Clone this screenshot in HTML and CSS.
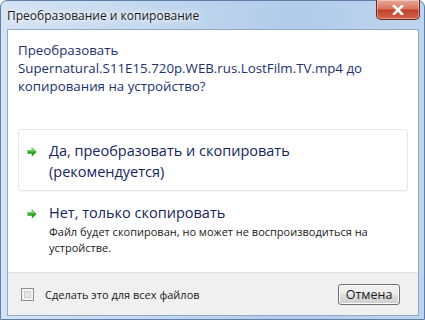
FILE: index.html
```html
<!DOCTYPE html>
<html lang="ru">
<head>
    <meta charset="UTF-8">
    <title>Преобразование и копирование</title>
    <link rel="stylesheet" href="styles.css">
</head>
<body>
    <div class="window">
        <div class="titlebar">
            <span class="title">Преобразование и копирование</span>
            <button class="close-btn">
                <svg width="12" height="10" viewBox="0 0 12 10">
                    <path d="M2 1 L10 9 M10 1 L2 9" stroke="#fff" stroke-width="2.6" stroke-linecap="square"/>
                </svg>
            </button>
        </div>

        <div class="client">
            <div class="content">
                <p class="instruction">Преобразовать Supernatural.S11E15.720p.WEB.rus.LostFilm.TV.mp4 до копирования на устройство?</p>

                <div class="command selected">
                    <svg class="arrow" width="10" height="10" viewBox="0 0 10 10">
                        <path d="M0.5 3.2 H4.8 V0.3 L9.6 5 L4.8 9.7 V6.8 H0.5 Z" fill="#2f9f2c"/>
                        <path d="M0.5 3.2 H4.8 V0.3 L7.6 3.1 V4.6 H0.5 Z" fill="#6fd05e"/>
                    </svg>
                    <div class="command-text">
                        <div class="command-title">Да, преобразовать и скопировать (рекомендуется)</div>
                    </div>
                </div>

                <div class="command">
                    <svg class="arrow" width="10" height="10" viewBox="0 0 10 10">
                        <path d="M0.5 3.2 H4.8 V0.3 L9.6 5 L4.8 9.7 V6.8 H0.5 Z" fill="#2f9f2c"/>
                        <path d="M0.5 3.2 H4.8 V0.3 L7.6 3.1 V4.6 H0.5 Z" fill="#6fd05e"/>
                    </svg>
                    <div class="command-text">
                        <div class="command-title">Нет, только скопировать</div>
                        <div class="command-note">Файл будет скопирован, но может не воспроизводиться на устройстве.</div>
                    </div>
                </div>
            </div>

            <div class="footer">
                <label class="check">
                    <span class="checkbox"></span>
                    Сделать это для всех файлов
                </label>
                <button class="cancel-btn">Отмена</button>
            </div>
        </div>
    </div>
</body>
</html>
```

FILE: styles.css
```css
html, body {
    margin: 0;
    padding: 0;
}
body {
    width: 425px;
    height: 320px;
    overflow: hidden;
    font-family: "Open Sans", "Noto Sans", sans-serif;
    background: #fff;
}
.window {
    height: 320px;
    box-sizing: border-box;
    display: flex;
    flex-direction: column;
    border: 1px solid #5d7ea6;
    border-radius: 7px 7px 0 0;
    background: linear-gradient(90deg, #d5e3f3 0%, #c3d8ef 35%, #b1cbe9 70%, #bfd5ee 100%);
}
.titlebar {
    height: 28px;
    display: flex;
    justify-content: space-between;
    align-items: flex-start;
    padding-left: 6px;
    padding-right: 4px;
}
.title {
    font-size: 12px;
    color: #1a1a1a;
    margin-top: 6px;
    text-shadow: 0 0 8px #fff, 0 0 4px #fff;
}
.close-btn {
    width: 44px;
    height: 20px;
    margin-top: -1px;
    padding: 0;
    border: 1px solid #6d2a22;
    border-top: none;
    border-radius: 0 0 5px 5px;
    background: linear-gradient(180deg, #e8a899 0%, #d9765f 45%, #c1412c 55%, #d3644c 100%);
    display: flex;
    align-items: center;
    justify-content: center;
    box-shadow: inset 0 0 0 1px rgba(255, 255, 255, 0.35);
}
.client {
    flex: 1;
    margin: 0 5px 3px 6px;
    border: 1px solid #8ea9c9;
    background: #fff;
    display: flex;
    flex-direction: column;
}
.content {
    flex: 1;
    padding: 11px 10px 0 10px;
}
.instruction {
    margin: 0 0 34px 0;
    font-size: 13.3px;
    line-height: 18px;
    color: #1c3270;
}
.command {
    display: flex;
    align-items: flex-start;
    gap: 12px;
    padding: 10px 8px 8px 8px;
    border: 1px solid transparent;
    border-radius: 3px;
}
.command.selected {
    border-color: #e2e8ee;
    box-shadow: 0 1px 1px rgba(0, 0, 0, 0.03);
}
.command-text {
    max-width: 325px;
}
.arrow {
    margin-top: 7px;
    flex-shrink: 0;
}
.command-title {
    font-size: 14.5px;
    line-height: 21px;
    color: #16245e;
}
.command-note {
    font-size: 11px;
    line-height: 16px;
    color: #1a1a1a;
    margin-top: 1px;
}
.footer {
    height: 43px;
    box-sizing: border-box;
    border-top: 1px solid #dfdfdf;
    background: #f0f0f0;
    display: flex;
    align-items: center;
    justify-content: space-between;
    padding: 0 18px 0 13px;
}
.check {
    display: flex;
    align-items: center;
    gap: 11px;
    font-size: 11px;
    color: #1a1a1a;
}
.checkbox {
    width: 11px;
    height: 11px;
    border: 1px solid #8e8f8f;
    background: linear-gradient(135deg, #dcdcdc 0%, #f2f2f2 100%);
    box-shadow: inset 0 0 0 2px #f4f4f4, inset 0 0 0 3px #d0d0d0;
}
.cancel-btn {
    width: 62px;
    height: 21px;
    padding: 0;
    font-family: inherit;
    font-size: 12.5px;
    color: #1a1a1a;
    border: 1px solid #707070;
    border-radius: 3px;
    background: linear-gradient(180deg, #f2f2f2 0%, #ebebeb 48%, #dddddd 52%, #cfcfcf 100%);
    box-shadow: inset 0 0 0 1px #fcfcfc;
}
```
